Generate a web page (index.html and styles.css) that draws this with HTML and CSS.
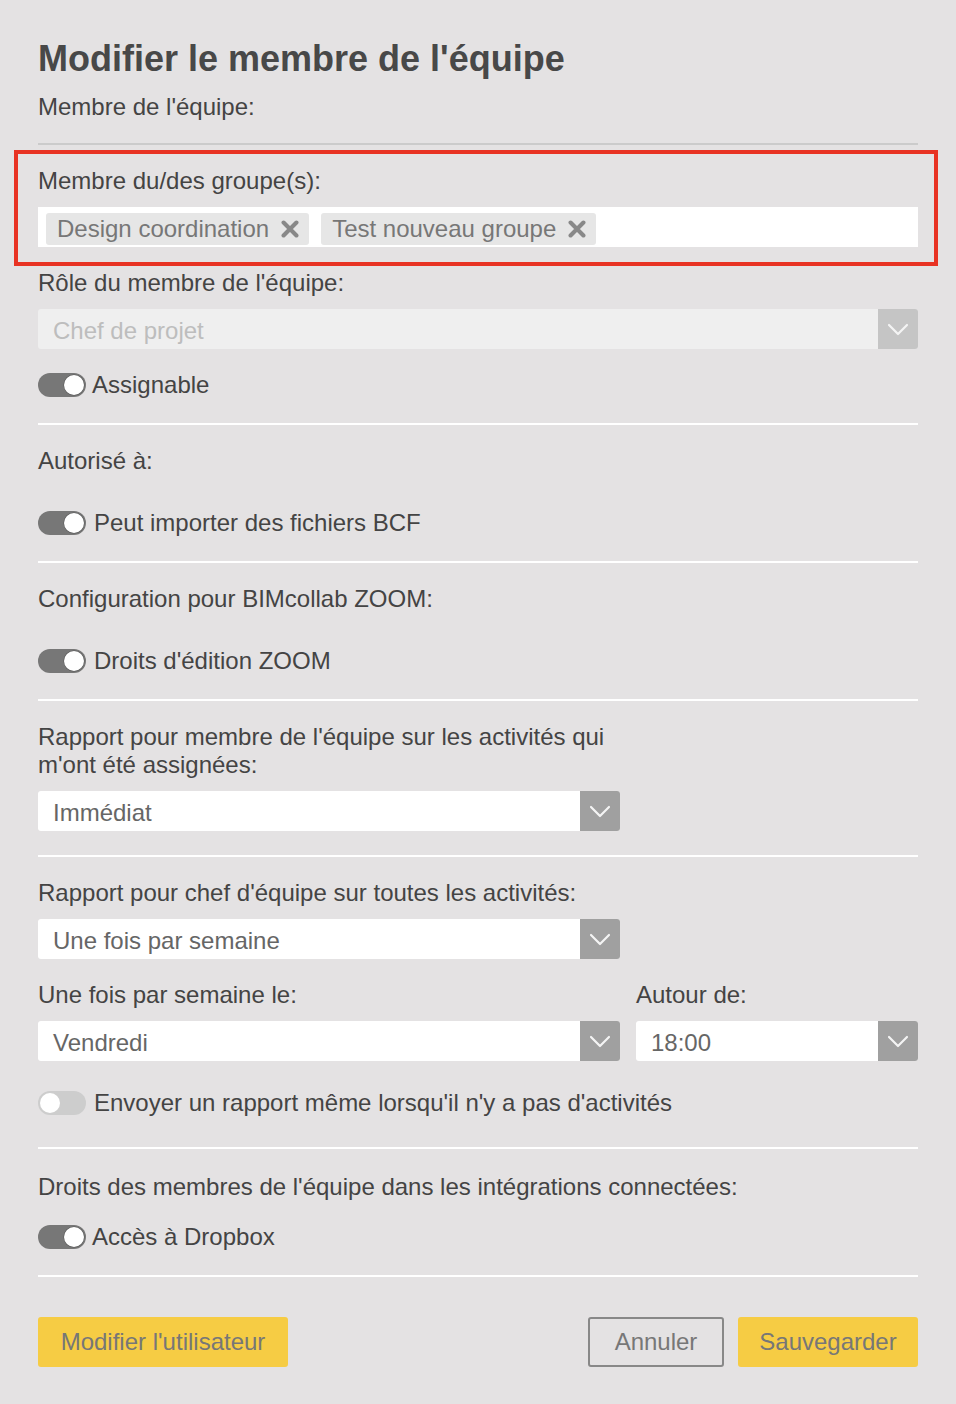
FILE: index.html
```html
<!DOCTYPE html>
<html lang="fr">
<head>
<meta charset="utf-8">
<link rel="stylesheet" href="styles.css">
</head>
<body>
<div class="page">
  <h1 class="title">Modifier le membre de l'équipe</h1>
  <div class="label l-member">Membre de l'équipe:</div>
  <hr class="sep sep-gray">

  <div class="highlight">
    <div class="label">Membre du/des groupe(s):</div>
    <div class="taginput">
      <span class="tag">Design coordination <svg class="x" viewBox="0 0 14 14"><path d="M2 2L12 12M12 2L2 12"/></svg></span>
      <span class="tag">Test nouveau groupe <svg class="x" viewBox="0 0 14 14"><path d="M2 2L12 12M12 2L2 12"/></svg></span>
    </div>
  </div>

  <div class="label l-role">Rôle du membre de l'équipe:</div>
  <div class="select disabled full"><span class="val">Chef de projet</span><span class="chev"><svg viewBox="0 0 40 40"><path d="M11 16L20 25L29 16"/></svg></span></div>
  <div class="toggle-row r-assign"><span class="toggle on"></span><span>Assignable</span></div>
  <hr class="sep s1">

  <div class="label l-auth">Autorisé à:</div>
  <div class="toggle-row r-gap"><span class="toggle on"></span><span class="tlabel">Peut importer des fichiers BCF</span></div>
  <hr class="sep s1">

  <div class="label l-auth">Configuration pour BIMcollab ZOOM:</div>
  <div class="toggle-row r-gap"><span class="toggle on"></span><span class="tlabel">Droits d'édition ZOOM</span></div>
  <hr class="sep s1">

  <div class="label l-auth narrow">Rapport pour membre de l'équipe sur les activités qui m'ont été assignées:</div>
  <div class="select half"><span class="val">Immédiat</span><span class="chev"><svg viewBox="0 0 40 40"><path d="M11 16L20 25L29 16"/></svg></span></div>
  <hr class="sep s1">

  <div class="label l-auth">Rapport pour chef d'équipe sur toutes les activités:</div>
  <div class="select half"><span class="val">Une fois par semaine</span><span class="chev"><svg viewBox="0 0 40 40"><path d="M11 16L20 25L29 16"/></svg></span></div>

  <div class="grid2">
    <div class="col">
      <div class="label">Une fois par semaine le:</div>
      <div class="select"><span class="val">Vendredi</span><span class="chev"><svg viewBox="0 0 40 40"><path d="M11 16L20 25L29 16"/></svg></span></div>
    </div>
    <div class="col">
      <div class="label">Autour de:</div>
      <div class="select"><span class="val">18:00</span><span class="chev"><svg viewBox="0 0 40 40"><path d="M11 16L20 25L29 16"/></svg></span></div>
    </div>
  </div>
  <div class="toggle-row r-send"><span class="toggle"></span><span class="tlabel">Envoyer un rapport même lorsqu'il n'y a pas d'activités</span></div>
  <hr class="sep s-send">

  <div class="label l-rights">Droits des membres de l'équipe dans les intégrations connectées:</div>
  <div class="toggle-row r-assign2"><span class="toggle on"></span><span>Accès à Dropbox</span></div>
  <hr class="sep s1">

  <div class="buttons">
    <button class="btn yellow">Modifier l'utilisateur</button>
    <div class="right">
      <button class="btn outline">Annuler</button>
      <button class="btn yellow save">Sauvegarder</button>
    </div>
  </div>
</div>
</body>
</html>
```

FILE: styles.css
```css
html, body {
  margin: 0;
  padding: 0;
  background: #e4e2e3;
}
body {
  font-family: "Liberation Sans", Arial, sans-serif;
  color: #444;
  font-size: 24px;
}
.page {
  width: 880px;
  padding: 38px 38px 0;
  height: 1366px;
}
.title {
  margin: 0;
  font-size: 36px;
  line-height: 42px;
  font-weight: bold;
  color: #484848;
}
.label {
  line-height: 28px;
  font-size: 24px;
}
.l-member { margin-top: 13px; }
.sep {
  border: 0;
  height: 2px;
  background: #fff;
  margin: 24px 0 0;
}
.sep-gray {
  background: #cbcbcb;
  margin-top: 22px;
}
.highlight {
  margin: 5px -20px 0 -24px;
  border: 4px solid #e83323;
  padding: 13px 16px 15px 20px;
}
.taginput {
  margin-top: 12px;
  background: #fff;
  height: 40px;
  box-sizing: border-box;
  display: flex;
  align-items: flex-end;
  gap: 12px;
  padding: 0 8px 2px;
}
.tag {
  display: inline-flex;
  align-items: center;
  gap: 12px;
  height: 32px;
  padding: 0 10px 0 11px;
  background: #e6e6e6;
  border-radius: 3px;
  color: #777;
  font-size: 24px;
}
.x {
  width: 18px;
  height: 18px;
  stroke: #888;
  stroke-width: 3.2;
  fill: none;
  stroke-linecap: round;
}
.l-role { margin-top: 3px; }
.select {
  margin-top: 12px;
  height: 40px;
  background: #fff;
  display: flex;
  align-items: center;
  border-radius: 3px;
  overflow: hidden;
}
.select .val {
  flex: 1;
  padding: 3px 0 0 15px;
  color: #666;
  font-size: 24px;
}
.select .chev {
  width: 40px;
  height: 40px;
  background: #a0a0a0;
  display: flex;
}
.chev svg {
  width: 40px;
  height: 40px;
  fill: none;
  stroke: #f4f4f4;
  stroke-width: 2.2;
  stroke-linecap: round;
  stroke-linejoin: round;
}
.select.disabled {
  background: #efefef;
}
.select.disabled .val { color: #bdbdbd; }
.select.disabled .chev { background: #c5c5c5; }
.full { width: 880px; }
.half { width: 582px; }
.toggle-row {
  display: flex;
  align-items: center;
  gap: 6px;
  line-height: 28px;
}
.toggle-row .tlabel { margin-left: 2px; }
.r-assign { margin-top: 22px; }
.r-gap { margin-top: 34px; }
.r-send { margin-top: 28px; }
.r-assign2 { margin-top: 22px; }
.toggle {
  position: relative;
  width: 48px;
  height: 24px;
  border-radius: 12px;
  background: #cdcdcd;
  flex: none;
}
.toggle::after {
  content: "";
  position: absolute;
  top: 2px;
  left: 2px;
  width: 20px;
  height: 20px;
  border-radius: 50%;
  background: #fff;
}
.toggle.on { background: #777; }
.toggle.on::after { left: 26px; box-shadow: 0 0 0 0.5px #555; }
.l-auth { margin-top: 22px; }
.narrow { width: 580px; }
.grid2 {
  display: grid;
  grid-template-columns: 582px 282px;
  column-gap: 16px;
  margin-top: 22px;
}
.s-send { margin-top: 30px; }
.l-rights { margin-top: 24px; }
.buttons {
  margin-top: 40px;
  display: flex;
  justify-content: space-between;
}
.right { display: flex; gap: 14px; }
.btn {
  height: 50px;
  font-family: inherit;
  font-size: 24px;
  color: #777;
  border-radius: 3px;
  cursor: pointer;
}
.btn.yellow {
  background: #f6cc44;
  border: 0;
  width: 250px;
}
.btn.save { width: 180px; }
.btn.outline {
  background: transparent;
  border: 2px solid #888;
  width: 136px;
}
```
